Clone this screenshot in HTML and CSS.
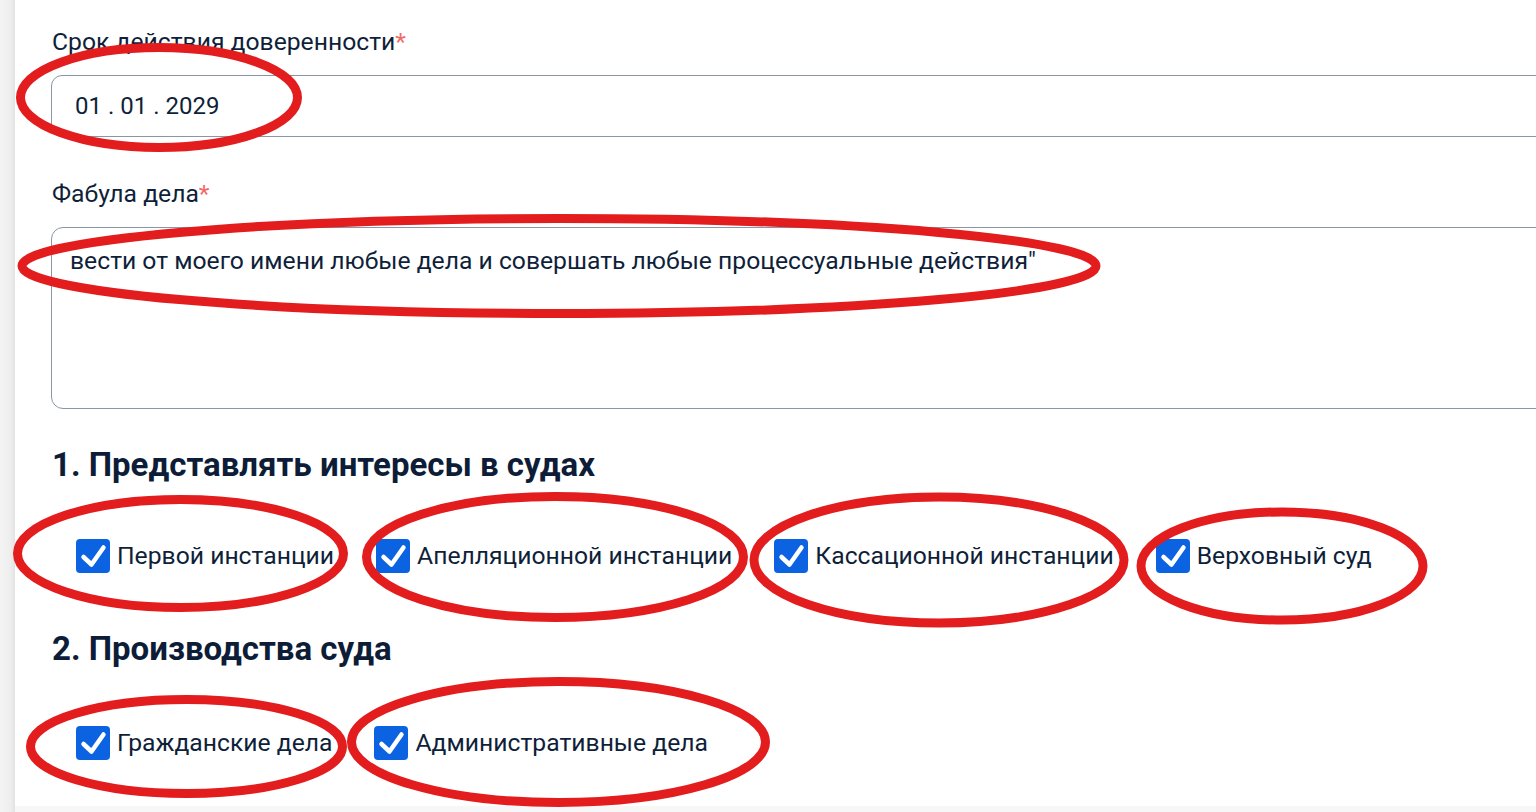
FILE: index.html
```html
<!DOCTYPE html>
<html lang="ru">
<head>
<meta charset="utf-8">
<title>Доверенность</title>
<link rel="stylesheet" href="styles.css">
</head>
<body>
<div class="edge"></div>
<main class="content">
  <div class="group">
    <div class="label">Срок действия доверенности<span class="req">*</span></div>
    <div class="input">01 . 01 . 2029</div>
  </div>
  <div class="group">
    <div class="label">Фабула дела<span class="req">*</span></div>
    <div class="textarea">вести от моего имени любые дела и совершать любые процессуальные действия"</div>
  </div>
  <h2 class="heading">1. Представлять интересы в судах</h2>
  <div class="checks">
    <label class="check"><span class="box"><svg viewBox="0 0 34 34"><path d="M7.5 18 L15.5 25.5 L27.5 8.5"/></svg></span><span class="text">Первой инстанции</span></label>
    <label class="check"><span class="box"><svg viewBox="0 0 34 34"><path d="M7.5 18 L15.5 25.5 L27.5 8.5"/></svg></span><span class="text">Апелляционной инстанции</span></label>
    <label class="check"><span class="box"><svg viewBox="0 0 34 34"><path d="M7.5 18 L15.5 25.5 L27.5 8.5"/></svg></span><span class="text">Кассационной инстанции</span></label>
    <label class="check"><span class="box"><svg viewBox="0 0 34 34"><path d="M7.5 18 L15.5 25.5 L27.5 8.5"/></svg></span><span class="text">Верховный суд</span></label>
  </div>
  <h2 class="heading">2. Производства суда</h2>
  <div class="checks">
    <label class="check"><span class="box"><svg viewBox="0 0 34 34"><path d="M7.5 18 L15.5 25.5 L27.5 8.5"/></svg></span><span class="text">Гражданские дела</span></label>
    <label class="check"><span class="box"><svg viewBox="0 0 34 34"><path d="M7.5 18 L15.5 25.5 L27.5 8.5"/></svg></span><span class="text">Административные дела</span></label>
  </div>
</main>
<div class="bottom"></div>
<svg class="marks" viewBox="0 0 1536 812" width="1536" height="812">
  <ellipse cx="159" cy="97.5" rx="138.5" ry="50"/>
  <ellipse cx="559" cy="266" rx="537" ry="47.5"/>
  <ellipse cx="180.5" cy="553.5" rx="163" ry="54"/>
  <ellipse cx="555" cy="557" rx="188.5" ry="60.5"/>
  <ellipse cx="939" cy="560" rx="185" ry="63"/>
  <ellipse cx="1282" cy="566" rx="141" ry="54"/>
  <ellipse cx="186.5" cy="746.5" rx="156" ry="47"/>
  <ellipse cx="558.5" cy="742" rx="207" ry="60.5"/>
</svg>
</body>
</html>
```
FILE: styles.css
```css
* { box-sizing: border-box; }
html, body { margin: 0; padding: 0; }
body {
  position: relative;
  display: flex;
  width: 1536px;
  height: 812px;
  overflow: hidden;
  background: #ffffff;
  font-family: Roboto, "Liberation Sans", Arial, sans-serif;
  color: #0f1f3a;
}
.edge {
  width: 15px;
  flex: none;
  background: linear-gradient(to right, #f4f4f4 0%, #eeeeee 70%, #e2e2e2 100%);
}
.bottom {
  position: absolute;
  left: 15px;
  right: 0;
  bottom: 0;
  height: 6px;
  background: #f7f7f7;
}
.content {
  flex: 1;
  min-width: 0;
  overflow: hidden;
  padding: 28px 0 0 36px;
}
.group { margin-bottom: 43px; }
.label {
  font-size: 24.7px;
  line-height: 28px;
  margin-bottom: 19px;
  padding-left: 1px;
  white-space: nowrap;
}
.req { color: #f26b6b; }
.input {
  width: 1540px;
  height: 62px;
  border: 1px solid #8b95a3;
  border-radius: 11px;
  padding: 0 23px;
  display: flex;
  align-items: center;
  font-size: 24px;
  line-height: 28px;
}
.textarea {
  width: 1540px;
  height: 182px;
  border: 1px solid #8b95a3;
  border-radius: 12px;
  padding: 19px 18px;
  font-size: 24.7px;
  line-height: 28px;
  white-space: nowrap;
}
.group + .group { margin-bottom: 37px; }
.heading {
  margin: 0 0 55px 0;
  padding-left: 1px;
  font-size: 33px;
  line-height: 38px;
  font-weight: 700;
  color: #0d1d38;
  white-space: nowrap;
}
.checks + .heading { margin-bottom: 58px; }
.checks {
  display: flex;
  align-items: center;
  gap: 42px;
  margin: 0 0 57px 25px;
}
.check {
  display: flex;
  align-items: center;
  gap: 7px;
  height: 34px;
  white-space: nowrap;
}
.box {
  width: 34px;
  height: 34px;
  flex: none;
  border-radius: 4px;
  background: #0b63e2;
  display: block;
}
.box svg { width: 34px; height: 34px; display: block; }
.box path {
  fill: none;
  stroke: #ffffff;
  stroke-width: 4.5;
  stroke-linecap: round;
  stroke-linejoin: round;
}
.text {
  font-size: 24.7px;
  line-height: 28px;
}
.marks {
  position: absolute;
  left: 0;
  top: 0;
  pointer-events: none;
}
.marks ellipse {
  fill: none;
  stroke: #e31c1e;
  stroke-width: 9;
}
```
